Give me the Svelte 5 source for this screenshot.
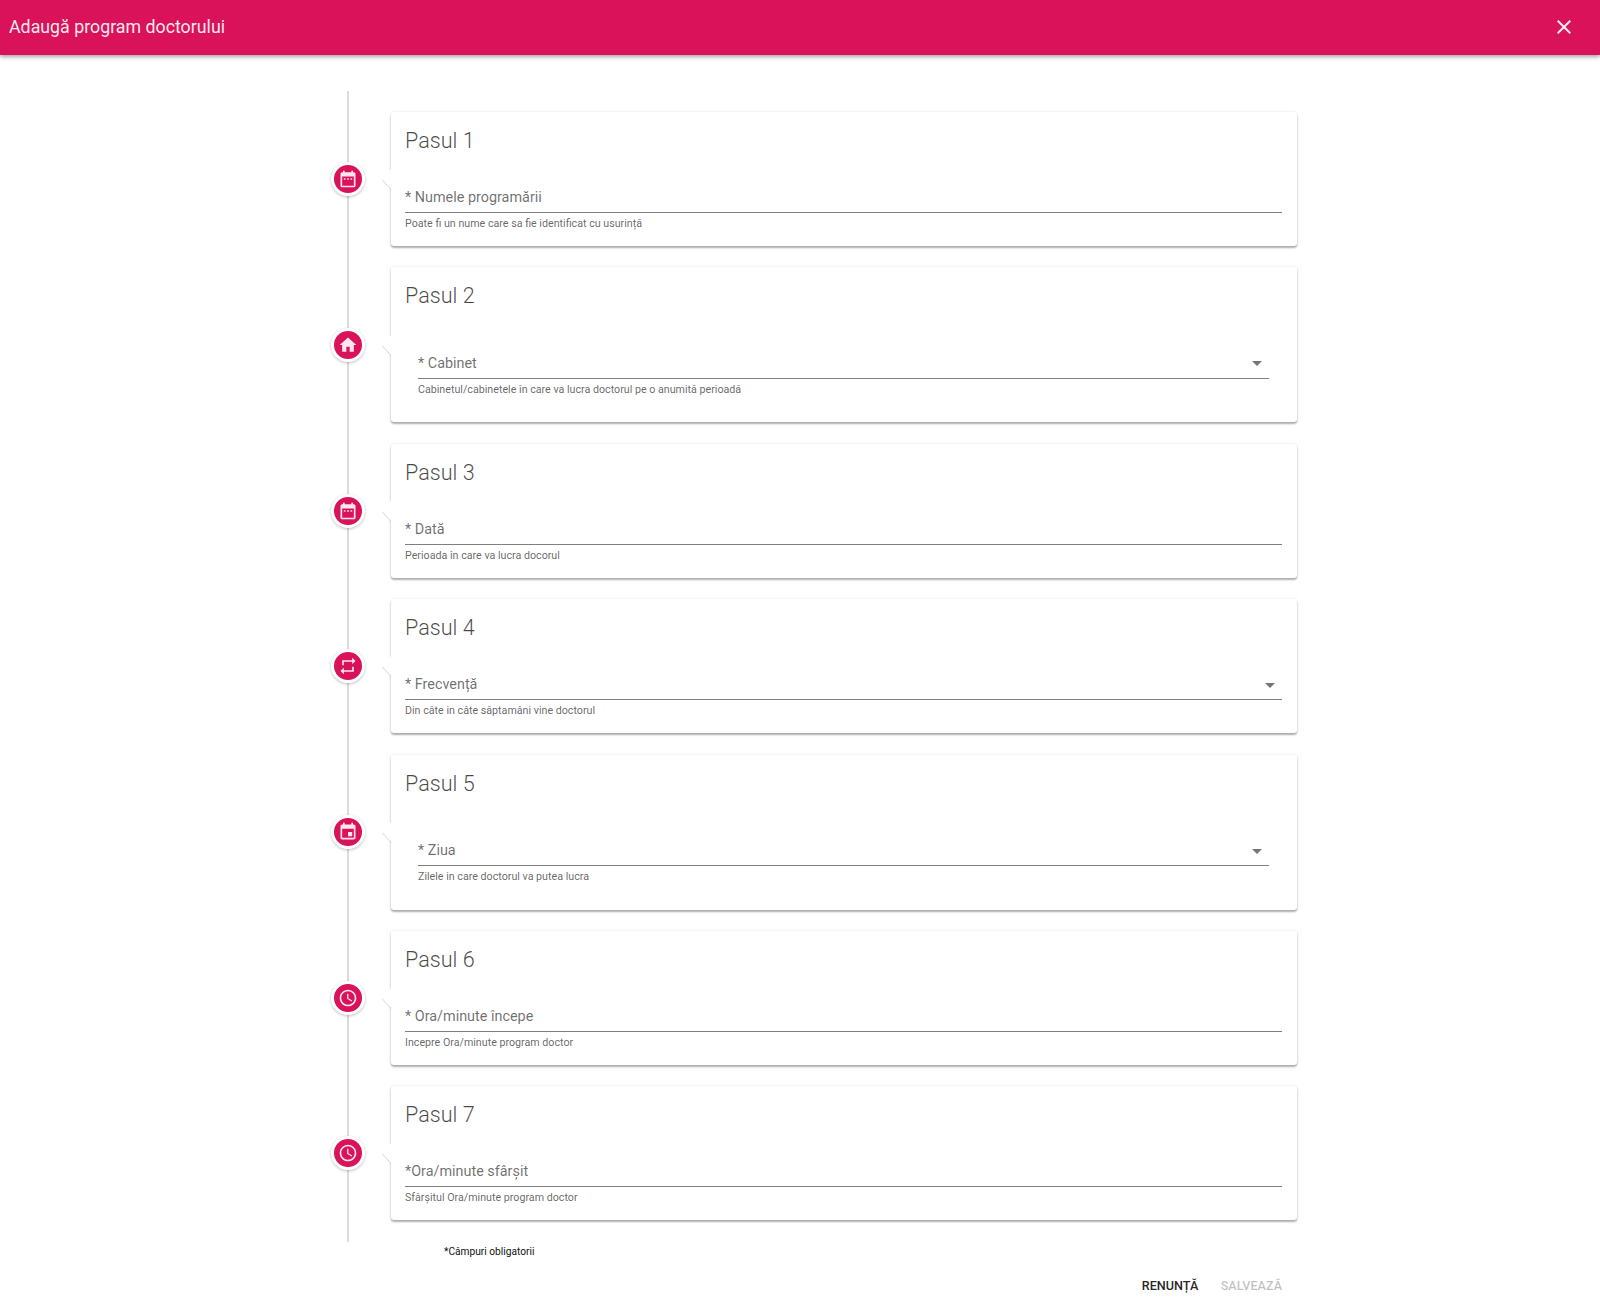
<script>
	const icons = {
		range: "M9 11H7v2h2v-2zm4 0h-2v2h2v-2zm4 0h-2v2h2v-2zm2-7h-1V2h-2v2H8V2H6v2H5c-1.11 0-1.99.9-1.99 2L3 20c0 1.1.89 2 2 2h14c1.1 0 2-.9 2-2V6c0-1.1-.9-2-2-2zm0 16H5V9h14v11z",
		home: "M10 20v-6h4v6h5v-8h3L12 3 2 12h3v8z",
		repeat: "M7 7h10v3l4-4-4-4v3H5v6h2V7zm10 10H7v-3l-4 4 4 4v-3h12v-6h-2v4z",
		event: "M17 12h-5v5h5v-5zM16 1v2H8V1H6v2H5c-1.11 0-1.99.9-1.99 2L3 19c0 1.1.89 2 2 2h14c1.1 0 2-.9 2-2V5c0-1.1-.9-2-2-2h-1V1h-2zm3 18H5V8h14v11z",
		clock: "M11.99 2C6.47 2 2 6.48 2 12s4.47 10 9.99 10C17.52 22 22 17.52 22 12S17.52 2 11.99 2zM12 20c-4.42 0-8-3.58-8-8s3.58-8 8-8 8 3.58 8 8-3.58 8-8 8zM12.5 7H11v6l5.25 3.15.75-1.23-4.5-2.67z",
	}

	const steps = [
		{ title: "Pasul 1", icon: "range", label: "* Numele programării", help: "Poate fi un nume care sa fie identificat cu usurință" },
		{ title: "Pasul 2", icon: "home", label: "* Cabinet", help: "Cabinetul/cabinetele în care va lucra doctorul pe o anumită perioadă", select: true, inset: true },
		{ title: "Pasul 3", icon: "range", label: "* Dată", help: "Perioada în care va lucra docorul" },
		{ title: "Pasul 4", icon: "repeat", label: "* Frecvență", help: "Din câte in câte săptamâni vine doctorul", select: true },
		{ title: "Pasul 5", icon: "event", label: "* Ziua", help: "Zilele in care doctorul va putea lucra", select: true, inset: true },
		{ title: "Pasul 6", icon: "clock", label: "* Ora/minute începe", help: "Incepre Ora/minute program doctor" },
		{ title: "Pasul 7", icon: "clock", label: "*Ora/minute sfârșit", help: "Sfârșitul Ora/minute program doctor" },
	]
</script>

<header class="appbar">
	<h1>Adaugă program doctorului</h1>
	<button class="close" aria-label="Închide">
		<svg viewBox="0 0 24 24" width="24" height="24"><path fill="currentColor" d="M19 6.41L17.59 5 12 10.59 6.41 5 5 6.41 10.59 12 5 17.59 6.41 19 12 13.41 17.59 19 19 17.59 13.41 12z" /></svg>
	</button>
</header>

<main>
	<div class="timeline">
		{#each steps as step}
			<section class="step">
				<div class="marker">
					<span class="badge">
						<svg viewBox="0 0 24 24" width="20" height="20"><path fill="currentColor" d={icons[step.icon]} /></svg>
					</span>
				</div>
				<div class="card">
					<h2>{step.title}</h2>
					<div class="field" class:inset={step.inset}>
						<div class="control">
							<span>{step.label}</span>
							{#if step.select}
								<svg viewBox="0 0 24 24" width="24" height="24"><path fill="currentColor" d="M7 10l5 5 5-5z" /></svg>
							{/if}
						</div>
						<p>{step.help}</p>
					</div>
				</div>
			</section>
		{/each}
	</div>
	<p class="note">*Câmpuri obligatorii</p>
	<div class="actions">
		<button class="cancel">Renunță</button>
		<button class="save" disabled>Salvează</button>
	</div>
</main>

<style>
	:global(body) {
		background: #fff;
		font-family: Roboto, "Liberation Sans", sans-serif;
	}

	.appbar {
		height: 55px;
		display: flex;
		align-items: center;
		justify-content: space-between;
		padding: 0 24px 0 9px;
		background: #da125a;
		color: rgba(255, 255, 255, 0.92);
		box-shadow: 0 2px 4px rgba(0, 0, 0, 0.35);
	}

	.appbar h1 {
		margin: 0 0 2px;
		font-size: 17.8px;
		font-weight: 400;
	}

	.close {
		display: flex;
		padding: 0;
		margin-bottom: 2px;
		border: 0;
		background: none;
		color: inherit;
	}

	main {
		width: 994px;
		margin: 36px auto 0;
	}

	.timeline {
		position: relative;
		display: flex;
		flex-direction: column;
		gap: 21.4px;
		padding: 21px 0 22px;
	}

	.timeline::before {
		content: "";
		position: absolute;
		top: 0;
		bottom: 0;
		left: 44px;
		width: 2px;
		background: #dcdcdc;
	}

	.step {
		display: flex;
		align-items: center;
	}

	.marker {
		position: relative;
		flex: 0 0 88px;
		display: flex;
		justify-content: center;
		padding-left: 2px;
		box-sizing: border-box;
	}

	.badge {
		width: 28px;
		height: 28px;
		display: flex;
		align-items: center;
		justify-content: center;
		border-radius: 50%;
		background: #da125a;
		border: 3px solid #fff;
		color: rgba(255, 255, 255, 0.9);
		box-shadow: 0 1px 3px rgba(0, 0, 0, 0.25);
	}

	.card {
		position: relative;
		flex: 1;
		padding: 15px 15px 15px 14px;
		background: #fff;
		border-radius: 3px;
		box-shadow: 0 2px 2px rgba(0, 0, 0, 0.3), 0 0 3px rgba(0, 0, 0, 0.1);
	}

	.card::before {
		content: "";
		position: absolute;
		top: 50%;
		left: -9px;
		margin-top: -10px;
		border-style: solid;
		border-width: 10px 9px 10px 0;
		border-color: transparent #fff transparent transparent;
		filter: drop-shadow(0 1px 0.5px rgba(0, 0, 0, 0.18));
	}

	h2 {
		margin: 0;
		font-size: 21.6px;
		line-height: 28px;
		font-weight: 300;
		color: rgba(0, 0, 0, 0.72);
	}

	.field {
		margin-top: 30px;
	}

	.field.inset {
		margin: 40.5px 13px 10.5px 13px;
	}

	.control {
		height: 25px;
		padding-bottom: 2px;
		display: flex;
		align-items: center;
		justify-content: space-between;
		border-bottom: 1px solid rgba(0, 0, 0, 0.5);
		font-size: 14.4px;
		color: rgba(0, 0, 0, 0.58);
	}

	.control svg {
		color: rgba(0, 0, 0, 0.54);
	}

	.field p {
		margin: 4px 0 0;
		font-size: 10.7px;
		line-height: 14px;
		color: rgba(0, 0, 0, 0.62);
	}

	.note {
		margin: 0;
		padding-left: 141px;
		font-size: 10.2px;
		line-height: 20px;
		color: #111;
	}

	.actions {
		display: flex;
		justify-content: flex-end;
		gap: 22.5px;
		margin-top: 14px;
		padding-right: 15px;
	}

	.actions button {
		padding: 0;
		border: 0;
		background: none;
		font: 500 12.6px/20px Roboto, "Liberation Sans", sans-serif;
		text-transform: uppercase;
	}

	.cancel {
		color: rgba(0, 0, 0, 0.87);
	}

	.save {
		color: rgba(0, 0, 0, 0.26);
	}
</style>
